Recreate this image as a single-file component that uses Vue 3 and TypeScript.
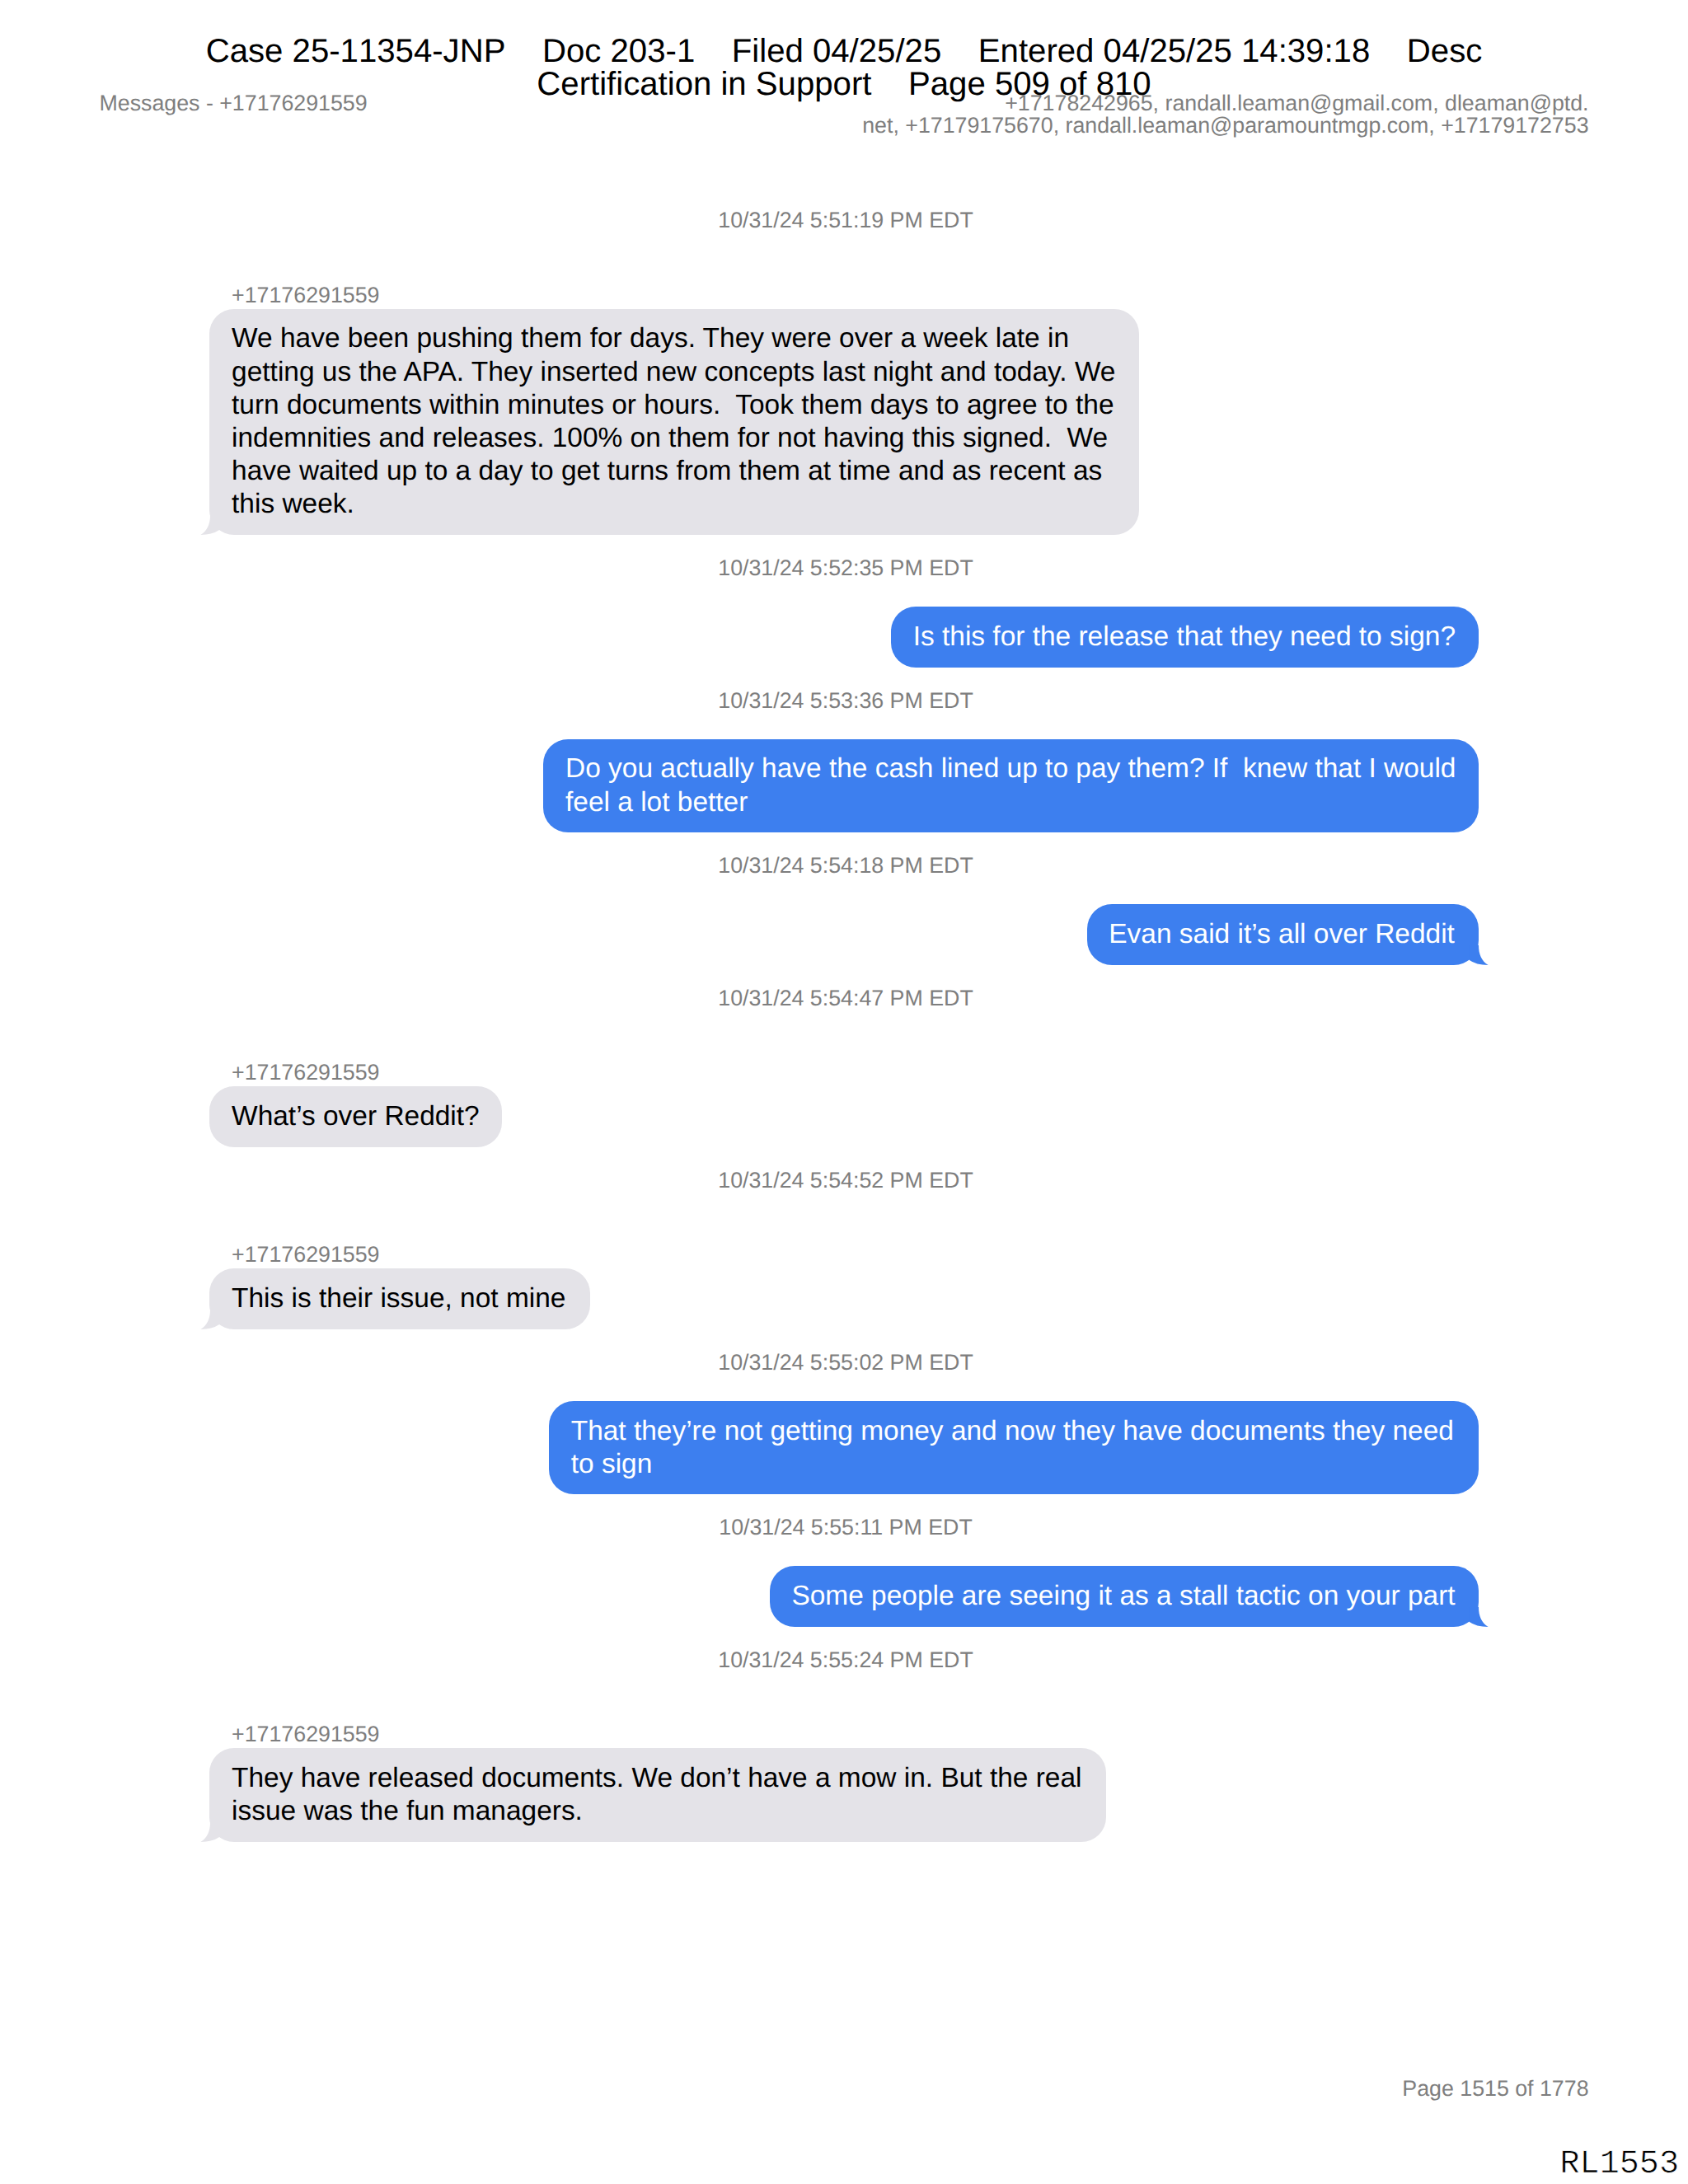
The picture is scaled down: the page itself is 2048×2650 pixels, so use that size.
<script setup lang="ts">
interface Message {
  time: string
  from?: string
  lines: string[]
  /** bubble width in points */
  width: number
  tail: boolean
}

const PT = 2048 / 612
const contact = '+17176291559'

const messages: Message[] = [
  {
    time: '10/31/24 5:51:19 PM EDT',
    from: contact,
    lines: [
      'We have been pushing them for days. They were over a week late in',
      'getting us the APA. They inserted new concepts last night and today. We',
      'turn documents within minutes or hours.  Took them days to agree to the',
      'indemnities and releases. 100% on them for not having this signed.  We',
      'have waited up to a day to get turns from them at time and as recent as',
      'this week.',
    ],
    width: 337,
    tail: true,
  },
  { time: '10/31/24 5:52:35 PM EDT', lines: ['Is this for the release that they need to sign?'], width: 213, tail: false },
  {
    time: '10/31/24 5:53:36 PM EDT',
    lines: ['Do you actually have the cash lined up to pay them? If  knew that I would', 'feel a lot better'],
    width: 339,
    tail: false,
  },
  { time: '10/31/24 5:54:18 PM EDT', lines: ['Evan said it’s all over Reddit'], width: 142, tail: true },
  { time: '10/31/24 5:54:47 PM EDT', from: contact, lines: ['What’s over Reddit?'], width: 106, tail: false },
  { time: '10/31/24 5:54:52 PM EDT', from: contact, lines: ['This is their issue, not mine'], width: 138, tail: true },
  {
    time: '10/31/24 5:55:02 PM EDT',
    lines: ['That they’re not getting money and now they have documents they need', 'to sign'],
    width: 337,
    tail: false,
  },
  { time: '10/31/24 5:55:11 PM EDT', lines: ['Some people are seeing it as a stall tactic on your part'], width: 257, tail: true },
  {
    time: '10/31/24 5:55:24 PM EDT',
    from: contact,
    lines: ['They have released documents. We don’t have a mow in. But the real', 'issue was the fun managers.'],
    width: 325,
    tail: true,
  },
]

const stamp = [
  ['Case 25-11354-JNP', 'Doc 203-1', 'Filed 04/25/25', 'Entered 04/25/25 14:39:18', 'Desc'].join('    '),
  ['Certification in Support', 'Page 509 of 810'].join('    '),
]
</script>

<template>
  <div class="page">
    <div class="stamp">
      <div v-for="line in stamp" :key="line">{{ line }}</div>
    </div>

    <header class="head">
      <div>Messages - {{ contact }}</div>
      <div class="people">
        <div>+17178242965, randall.leaman@gmail.com, dleaman@ptd.</div>
        <div>net, +17179175670, randall.leaman@paramountmgp.com, +17179172753</div>
      </div>
    </header>

    <main class="thread">
      <section v-for="m in messages" :key="m.time" class="entry" :class="m.from ? 'received' : 'sent'">
        <div class="time">{{ m.time }}</div>
        <div v-if="m.from" class="from">{{ m.from }}</div>
        <div class="bubble" :style="{ width: m.width * PT + 'px' }">
          <div v-for="line in m.lines" :key="line" class="line">{{ line }}</div>
          <svg v-if="m.tail" class="tail" width="28" height="26" viewBox="0 0 28 26">
            <path d="M16 2C16 13 19.5 21 27.6 26Q13 26 4.4 19.8V2Z" />
          </svg>
        </div>
      </section>
    </main>

    <footer class="foot">
      <div class="number">Page 1515 of 1778</div>
      <div class="bates">RL1553</div>
    </footer>
  </div>
</template>

<style>
body {
  margin: 0;
  background: #fff;
}
</style>

<style scoped>
.page {
  --pt: calc(2048px / 612);
  position: relative;
  display: flex;
  flex-direction: column;
  box-sizing: border-box;
  width: 2048px;
  height: 2650px;
  padding-top: 112px;
  overflow: hidden;
  background: #fff;
  color: #7e7e7e;
  font-family: "Liberation Sans", Arial, sans-serif;
  font-size: calc(8 * var(--pt));
  line-height: calc(8 * var(--pt));
  text-rendering: geometricPrecision;
  white-space: pre;
}

.stamp {
  position: absolute;
  top: 42.4px;
  left: 0;
  right: 0;
  color: #000;
  font-size: calc(12 * var(--pt));
  line-height: 40px;
  font-kerning: none;
  text-align: center;
}

.head {
  display: flex;
  justify-content: space-between;
  padding: 0 calc(36 * var(--pt));
}

.people {
  text-align: right;
}

.thread {
  display: flex;
  flex-direction: column;
  margin-top: 61.9px;
  padding: 0 calc(76 * var(--pt));
}

.entry {
  display: flex;
  flex-direction: column;
  align-items: flex-start;
}

.sent {
  align-items: flex-end;
}

.time {
  align-self: stretch;
  box-sizing: border-box;
  height: calc(26 * var(--pt));
  padding-left: 4px;
  line-height: 80px;
  text-align: center;
}

.from {
  box-sizing: border-box;
  height: calc(18 * var(--pt));
  padding: 27.4px 0 0 calc(8 * var(--pt));
  line-height: 33.8px;
}

.bubble {
  position: relative;
  box-sizing: border-box;
  padding: 16.8px 0 16.66px calc(8 * var(--pt));
  border-radius: calc(9 * var(--pt));
  font-size: calc(10 * var(--pt));
  line-height: calc(12 * var(--pt));
}

.received .bubble {
  background: #e4e3e8;
  color: #000;
}

.sent .bubble {
  background: #3d7fef;
  color: #fff;
}

.tail {
  position: absolute;
  right: -12px;
  bottom: 0;
  fill: #3d7fef;
}

.received .tail {
  right: auto;
  left: -11px;
  fill: #e4e3e8;
  transform: scaleX(-1);
}

.foot {
  display: flex;
  flex-direction: column;
  align-items: flex-end;
  margin-top: auto;
  padding-bottom: 3px;
}

.number {
  margin-right: calc(36 * var(--pt));
}

.bates {
  margin: 59px 11px 0 0;
  color: #000;
  font-family: "Courier New", "Liberation Mono", monospace;
  font-size: calc(12 * var(--pt));
  line-height: calc(12 * var(--pt));
  -webkit-text-stroke: 0.7px #fff;
}
</style>
